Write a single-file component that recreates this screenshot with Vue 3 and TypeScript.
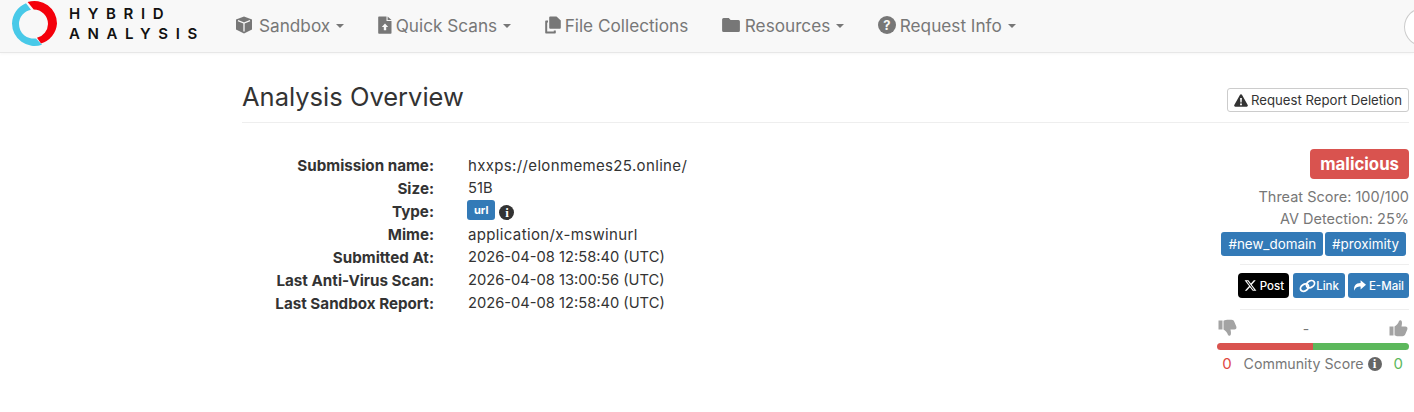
<script setup lang="ts">
interface NavItem {
  label: string
  icon: string
  caret: boolean
}

const navItems: NavItem[] = [
  { label: 'Sandbox', icon: 'cube', caret: true },
  { label: 'Quick Scans', icon: 'upload', caret: true },
  { label: 'File Collections', icon: 'files', caret: false },
  { label: 'Resources', icon: 'folder', caret: true },
  { label: 'Request Info', icon: 'question', caret: true }
]

const facts = [
  { key: 'Submission name:', value: 'hxxps://elonmemes25.online/', loose: true },
  { key: 'Size:', value: '51B', loose: false },
  { key: 'Type:', value: '', loose: false },
  { key: 'Mime:', value: 'application/x-mswinurl', loose: true },
  { key: 'Submitted At:', value: '2026-04-08 12:58:40 (UTC)', loose: false },
  { key: 'Last Anti-Virus Scan:', value: '2026-04-08 13:00:56 (UTC)', loose: false },
  { key: 'Last Sandbox Report:', value: '2026-04-08 12:58:40 (UTC)', loose: false }
]
</script>

<template>
  <div class="page">
    <nav class="navbar">
      <div class="brand">
        <svg class="logo" width="46" height="46" viewBox="0 0 46 46">
          <path d="M15.6 1.1 A22.5 22.5 0 0 1 45 22.5 A22.5 22.5 0 0 1 29 42.5 L25 36.8 A14.5 14.5 0 0 0 36 23 A14.5 14.5 0 0 0 21.7 8.5 Z" fill="#f4000b" />
          <path d="M14 2.3 A22.5 22.5 0 0 0 0 22.5 A22.5 22.5 0 0 0 30 43.7 L24 37.4 A14.5 14.5 0 0 1 7 23 A14.5 14.5 0 0 1 19 8.7 Z" fill="#48c9e8" />
        </svg>
        <div class="brand-text">
          <span>HYBRID</span>
          <span>ANALYSIS</span>
        </div>
      </div>
      <ul class="nav-list">
        <li v-for="item in navItems" :key="item.label" class="nav-item">
          <svg v-if="item.icon === 'cube'" class="nav-icon cube" width="18" height="18" viewBox="0 0 18 18">
            <path d="M9 0.5 L17 3.5 V13.5 L9 17.5 L1 13.5 V3.5 Z" fill="#777" />
            <path d="M3 4.6 L9 7 L15 4.6 M9 7 V15.5" fill="none" stroke="#f8f8f8" stroke-width="1.3" />
          </svg>
          <svg v-else-if="item.icon === 'upload'" class="nav-icon" width="14" height="18" viewBox="0 0 14 18">
            <path d="M1 0.5 H8.5 V5 H13.5 V17 A0.8 0.8 0 0 1 12.7 17.8 H1 A0.8 0.8 0 0 1 0.2 17 V1.3 A0.8 0.8 0 0 1 1 0.5 Z M9.6 0.5 L13.5 4 H9.6 Z" fill="#777" />
            <path d="M7 7.5 L10.2 11 H8.2 V14.2 H5.8 V11 H3.8 Z" fill="#f8f8f8" />
          </svg>
          <svg v-else-if="item.icon === 'files'" class="nav-icon" width="16" height="18" viewBox="0 0 16 18">
            <path d="M5.2 0.5 H11.5 L15.8 4.5 V11.8 A1 1 0 0 1 14.8 12.8 H5.2 A1 1 0 0 1 4.2 11.8 V1.5 A1 1 0 0 1 5.2 0.5 Z" fill="#777" />
            <path d="M3 4.5 H1 A0.8 0.8 0 0 0 0.2 5.3 V16.7 A0.8 0.8 0 0 0 1 17.5 H10 A0.8 0.8 0 0 0 10.8 16.7 V14.6 H8.8 V15.6 H2.2 V6.5 H3 Z" fill="#777" />
          </svg>
          <svg v-else-if="item.icon === 'folder'" class="nav-icon folder" width="18" height="16" viewBox="0 0 18 16">
            <path d="M1.6 1 H6.8 L8.6 3 H16.4 A1.5 1.5 0 0 1 17.9 4.5 V13.5 A1.5 1.5 0 0 1 16.4 15 H1.6 A1.5 1.5 0 0 1 0.1 13.5 V2.5 A1.5 1.5 0 0 1 1.6 1 Z" fill="#777" />
          </svg>
          <span v-else class="nav-question">?</span>
          <span class="nav-label">{{ item.label }}</span>
          <i v-if="item.caret" class="caret"></i>
        </li>
      </ul>
      <div class="search-edge"></div>
    </nav>

    <main class="content">
      <header class="page-header">
        <h1>Analysis Overview</h1>
        <button class="delete-btn" type="button">
          <svg width="14" height="13" viewBox="0 0 14 13">
            <path d="M7 0.3 C7.5 0.3 7.9 0.6 8.1 1 L13.7 11 C14.1 11.8 13.6 12.7 12.7 12.7 H1.3 C0.4 12.7 -0.1 11.8 0.3 11 L5.9 1 C6.1 0.6 6.5 0.3 7 0.3 Z" fill="#333" />
            <path d="M6.1 4 H7.9 L7.6 8.6 H6.4 Z M6.1 9.6 H7.9 V11.2 H6.1 Z" fill="#fff" />
          </svg>
          <span>Request Report Deletion</span>
        </button>
      </header>

      <section class="overview">
        <dl class="facts">
          <template v-for="fact in facts" :key="fact.key">
            <dt>{{ fact.key }}</dt>
            <dd v-if="fact.value" :class="{ loose: fact.loose }">{{ fact.value }}</dd>
            <dd v-else class="type-cell">
              <span class="url-tag">url</span>
              <span class="info-dot dark">i</span>
            </dd>
          </template>
        </dl>

        <aside class="verdict">
          <div class="malicious">malicious</div>
          <div class="score first">Threat Score: 100/100</div>
          <div class="score">AV Detection: 25%</div>
          <div class="tags">
            <span class="hash-tag">#new_domain</span>
            <span class="hash-tag">#proximity</span>
          </div>
          <div class="rule"></div>
          <div class="share">
            <span class="share-btn black">
              <svg width="13" height="13" viewBox="0 0 24 24">
                <path d="M18.2 2.2 H21.6 L14.3 10.6 L22.9 21.8 H16.1 L10.9 15 L4.9 21.8 H1.5 L9.4 12.9 L1.1 2.2 H8.1 L12.8 8.4 Z M17 19.8 H18.9 L7 4.1 H5 Z" fill="#fff" />
              </svg>
              Post
            </span>
            <span class="share-btn link">
              <svg width="17" height="14" viewBox="0 0 17 14">
                <g fill="none" stroke="#fff" stroke-width="1.8">
                  <ellipse cx="5.5" cy="8.6" rx="4.4" ry="3.2" transform="rotate(-35 5.5 8.6)" />
                  <ellipse cx="11.5" cy="5.2" rx="4.4" ry="3.2" transform="rotate(-35 11.5 5.2)" />
                </g>
              </svg>Link
            </span>
            <span class="share-btn mail">
              <svg width="13" height="11" viewBox="0 0 13 11">
                <path d="M7.6 0.2 L13 4.8 L7.6 9.4 V6.6 C4.5 6.6 2.4 7.4 1.4 10.8 C0.2 6.4 2.6 3 7.6 3 Z" fill="#fff" />
              </svg>
              E-Mail
            </span>
          </div>
          <div class="rule"></div>
          <div class="votes">
            <svg width="19" height="18" viewBox="0 0 19 18">
              <path d="M0.5 1.5 H4.5 V10.5 H0.5 Z M5.5 1.8 C8 0.5 10 0.5 13.5 0.8 C15 0.9 15.8 1.6 16.4 3 L18.3 7.5 C18.9 9.2 18 10.5 16.3 10.5 H12.5 C12.9 12.5 13.2 14 12.8 15.5 C12.4 17 10.6 17.2 10 16 C9.3 13.5 7.5 11.5 5.5 10.5 Z" fill="#a3a3a3" />
            </svg>
            <span class="vote-dash">-</span>
            <svg width="19" height="18" viewBox="0 0 19 18">
              <path d="M0.5 7.5 H4.5 V16.5 H0.5 Z M5.5 16.2 C8 17.5 10 17.5 13.5 17.2 C15 17.1 15.8 16.4 16.4 15 L18.3 10.5 C18.9 8.8 18 7.5 16.3 7.5 H12.5 C12.9 5.5 13.2 4 12.8 2.5 C12.4 1 10.6 0.8 10 2 C9.3 4.5 7.5 6.5 5.5 7.5 Z" fill="#a3a3a3" />
            </svg>
          </div>
          <div class="meter"><span class="bad"></span><span class="good"></span></div>
          <div class="community">
            <span class="count red">0</span>
            <span class="community-label">Community Score</span>
            <span class="info-dot grey">i</span>
            <span class="count green">0</span>
          </div>
        </aside>
      </section>
    </main>
  </div>
</template>

<style>
html, body {
  margin: 0;
  background: #fff;
  overflow: hidden;
}
</style>

<style scoped>
.page {
  width: 1414px;
  height: 412px;
  overflow: hidden;
  font-family: "Inter", "Noto Sans", sans-serif;
  color: #333;
}

.navbar {
  display: flex;
  align-items: center;
  height: 52px;
  background: #f8f8f8;
  border-bottom: 1px solid #e7e7e7;
  box-shadow: 0 1px 3px rgba(0, 0, 0, 0.04);
  position: relative;
  overflow: hidden;
}

.brand {
  display: flex;
  align-items: center;
  margin-left: 12px;
  width: 223px;
  height: 48px;
  margin-top: -4px;
  flex: none;
}

.logo {
  flex: none;
}

.brand-text {
  display: flex;
  flex-direction: column;
  margin-left: 11px;
  font-weight: 600;
  font-size: 15px;
  line-height: 20px;
  letter-spacing: 7.6px;
  color: #111;
}

.nav-list {
  display: flex;
  align-items: center;
  list-style: none;
  margin: -2px 0 0;
  padding: 0;
  gap: 33.5px;
}

.nav-item {
  display: flex;
  align-items: center;
  color: #777;
  font-size: 17.2px;
}

.nav-icon {
  margin-right: 4px;
}

.nav-icon.cube {
  margin-right: 6px;
}

.nav-icon.folder {
  margin-right: 5px;
}

.nav-question {
  width: 18px;
  height: 18px;
  margin-right: 4px;
  border-radius: 50%;
  background: #777;
  color: #f8f8f8;
  font-size: 13px;
  font-weight: 700;
  line-height: 18px;
  text-align: center;
}

.caret {
  width: 0;
  height: 0;
  margin-left: 6px;
  margin-top: 2px;
  border-left: 4px solid transparent;
  border-right: 4px solid transparent;
  border-top: 4px solid #777;
}

.search-edge {
  position: absolute;
  left: 1404px;
  top: 7px;
  width: 40px;
  height: 38px;
  border: 1px solid #ccc;
  border-radius: 50%;
  background: #fff;
}

.content {
  margin-left: 242px;
  width: 1167px;
}

.page-header {
  display: flex;
  justify-content: space-between;
  align-items: flex-start;
  height: 70px;
  box-sizing: border-box;
  border-bottom: 1px solid #eee;
}

.page-header h1 {
  margin: 26px 0 0;
  font-size: 25.5px;
  font-weight: 400;
  line-height: 36px;
}

.delete-btn {
  display: flex;
  align-items: center;
  gap: 3px;
  height: 24px;
  margin-top: 35px;
  padding: 0 6px;
  border: 1px solid #ccc;
  border-radius: 3px;
  background: #fff;
  color: #333;
  font-family: inherit;
  font-size: 13.2px;
}

.overview {
  display: flex;
  justify-content: space-between;
  padding-top: 27px;
}

.facts {
  display: grid;
  grid-template-columns: 192px auto;
  grid-auto-rows: 23px;
  column-gap: 34px;
  margin: 4px 0 0;
  font-size: 14.7px;
  line-height: 23px;
  align-self: flex-start;
}

.facts dt {
  font-size: 15.2px;
  font-weight: 700;
  text-align: right;
}

.facts dd {
  margin: 0;
}

.facts dd.loose {
  font-size: 15px;
  letter-spacing: 0.35px;
}

.type-cell {
  display: flex;
  align-items: center;
  gap: 4px;
  margin-left: -1px !important;
}

.url-tag {
  display: inline-block;
  margin-top: -3px;
  padding: 0 7px;
  height: 20px;
  border-radius: 3px;
  background: #337ab7;
  color: #fff;
  font-size: 11px;
  font-weight: 700;
  line-height: 20px;
}

.info-dot {
  display: inline-block;
  width: 15px;
  height: 15px;
  border-radius: 50%;
  color: #fff;
  font-family: "Liberation Serif", serif;
  font-size: 13px;
  font-weight: 700;
  line-height: 15px;
  text-align: center;
}

.info-dot.dark {
  margin-top: 1px;
  background: #333;
}

.info-dot.grey {
  width: 14px;
  height: 14px;
  line-height: 14px;
  background: #666;
}

.verdict {
  display: flex;
  flex-direction: column;
  align-items: flex-end;
  width: 192px;
  margin-top: -1px;
}

.malicious {
  padding: 0 10px;
  height: 30px;
  border-radius: 4px;
  background: #d9534f;
  color: #fff;
  font-size: 16.8px;
  font-weight: 700;
  line-height: 30px;
}

.score {
  color: #777;
  font-size: 14.5px;
  line-height: 22px;
}

.score.first {
  margin-top: 7px;
}

.tags {
  display: flex;
  gap: 2px;
  margin-top: 2px;
  margin-right: 3px;
}

.hash-tag {
  height: 24px;
  padding: 0 7px;
  border-radius: 3px;
  background: #337ab7;
  color: #fff;
  font-size: 13.4px;
  line-height: 24px;
}

.rule {
  align-self: flex-end;
  width: 169px;
  height: 1px;
  margin-top: 8px;
  background: #eee;
}

.share {
  display: flex;
  gap: 3px;
  margin: 8px 0 11px;
}

.share-btn {
  display: flex;
  align-items: center;
  gap: 3px;
  height: 25px;
  padding: 0 5px;
  border-radius: 3px;
  background: #337ab7;
  color: #fff;
  font-size: 11.5px;
  font-weight: 500;
}

.share-btn.black {
  margin-right: 1px;
  padding: 0 5px 0 6px;
  border-radius: 4px;
  background: #000;
}

.share-btn.link {
  gap: 0;
  padding: 0 6px;
}

.share + .rule {
  margin-top: 0;
}

.votes {
  display: flex;
  justify-content: space-between;
  align-items: center;
  align-self: flex-end;
  width: 190px;
  margin: 9px 1px 0 0;
}

.vote-dash {
  padding-right: 14px;
  color: #777;
  font-size: 14px;
}

.meter {
  display: flex;
  width: 192px;
  height: 7px;
  margin-top: 6px;
  border-radius: 4px;
  overflow: hidden;
}

.bad {
  width: 50%;
  background: #d9534f;
}

.good {
  width: 50%;
  background: #5cb85c;
}

.community {
  display: flex;
  align-items: center;
  justify-content: flex-end;
  width: 192px;
  margin-top: 4px;
  font-size: 14.2px;
  color: #777;
  line-height: 20px;
}

.community-label {
  margin: 0 4px 0 12px;
}

.count {
  font-size: 15px;
}

.count.red {
  color: #e0483f;
}

.count.green {
  color: #5cb85c;
  margin-left: 12px;
  margin-right: 6px;
}
</style>
